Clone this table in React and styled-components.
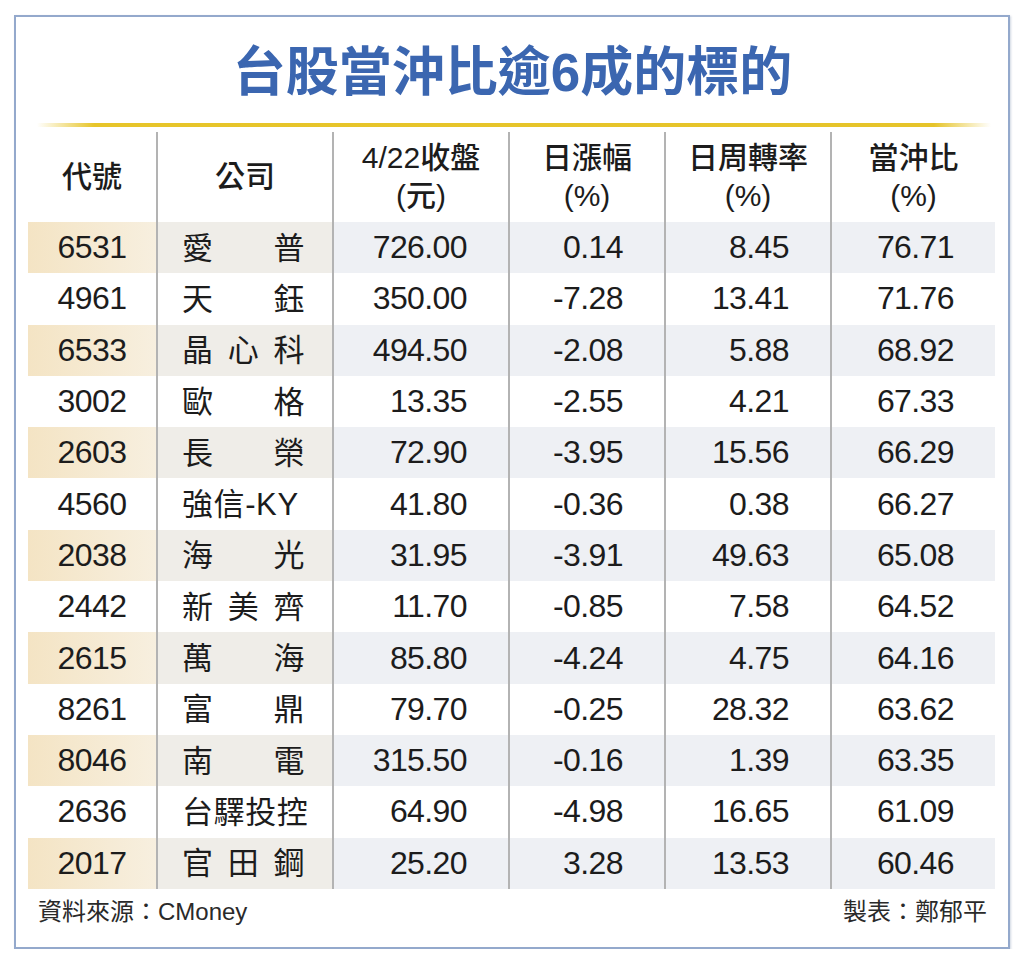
import React from "react";
import styled, { createGlobalStyle } from "styled-components";

const GlobalStyle = createGlobalStyle`
  html, body { margin: 0; padding: 0; background: #ffffff; }
  body { font-family: "Liberation Sans", "Noto Sans CJK TC", sans-serif; color: #1c1c1c; }
`;

const CJK = `"Liberation Sans", "Noto Sans CJK TC", sans-serif`;

const Frame = styled.div`
  box-sizing: border-box;
  width: 996px;
  height: 934px;
  margin: 15px 0 0 14px;
  border: 2px solid #94a9cc;
  box-shadow: 1px 1px 2px rgba(120, 140, 170, 0.35);
  padding: 0 11px 0 12px;
  display: flex;
  flex-direction: column;
`;

const Title = styled.h1`
  margin: 0;
  padding-top: 26px;
  height: 60px;
  line-height: 60px;
  text-align: center;
  font-family: ${CJK};
  font-size: 53px;
  font-weight: 700;
  color: #3b66b0;
`;

const Rule = styled.div`
  margin: 20px 6px 0 9px;
  height: 4px;
  background: linear-gradient(
    to right,
    rgba(230, 196, 40, 0) 0%,
    #e7c52a 6%,
    #e6c42a 94%,
    rgba(230, 196, 40, 0) 100%
  );
`;

const Table = styled.div`
  margin-top: 5px;
  display: grid;
  grid-template-columns: 128px 176px 176px 156px 166px 165px;
`;

const HeadCell = styled.div`
  height: 90px;
  display: flex;
  flex-direction: column;
  align-items: center;
  justify-content: center;
  font-family: ${CJK};
  font-size: 30px;
  font-weight: 500;
  line-height: 38px;
  color: #1c1c1c;
  border-left: ${(p) => (p.$first ? "none" : "2px solid #b3b3b3")};
  box-sizing: border-box;
`;

const Cell = styled.div`
  height: 51.3px;
  box-sizing: border-box;
  display: flex;
  align-items: center;
  font-family: ${CJK};
  font-size: 32px;
  letter-spacing: -0.6px;
  color: #1c1c1c;
  border-left: ${(p) => (p.$first ? "none" : "2px solid #b3b3b3")};
  justify-content: ${(p) => (p.$center ? "center" : "flex-end")};
  padding-right: ${(p) => (p.$center ? "0" : "41px")};
  background: ${(p) =>
    !p.$shade
      ? "#ffffff"
      : p.$kind === "code"
      ? "linear-gradient(to right, #f4e4c4, #f7efdf)"
      : p.$kind === "name"
      ? "#efede8"
      : "#eef0f4"};
`;

const NameCell = styled(Cell)`
  justify-content: space-between;
  padding: 0 27px 5px 24px;
  font-size: 31px;
  letter-spacing: 0.6px;
`;

const Footer = styled.div`
  display: flex;
  justify-content: space-between;
  align-items: center;
  padding: 6px 10px 0 10px;
  height: 30px;
  font-family: ${CJK};
  font-size: 24px;
  color: #2a2a2a;
`;

const rows = [
  ["6531", ["愛", "普"], "726.00", "0.14", "8.45", "76.71"],
  ["4961", ["天", "鈺"], "350.00", "-7.28", "13.41", "71.76"],
  ["6533", ["晶", "心", "科"], "494.50", "-2.08", "5.88", "68.92"],
  ["3002", ["歐", "格"], "13.35", "-2.55", "4.21", "67.33"],
  ["2603", ["長", "榮"], "72.90", "-3.95", "15.56", "66.29"],
  ["4560", ["強信-KY"], "41.80", "-0.36", "0.38", "66.27"],
  ["2038", ["海", "光"], "31.95", "-3.91", "49.63", "65.08"],
  ["2442", ["新", "美", "齊"], "11.70", "-0.85", "7.58", "64.52"],
  ["2615", ["萬", "海"], "85.80", "-4.24", "4.75", "64.16"],
  ["8261", ["富", "鼎"], "79.70", "-0.25", "28.32", "63.62"],
  ["8046", ["南", "電"], "315.50", "-0.16", "1.39", "63.35"],
  ["2636", ["台", "驛", "投", "控"], "64.90", "-4.98", "16.65", "61.09"],
  ["2017", ["官", "田", "鋼"], "25.20", "3.28", "13.53", "60.46"],
];

const headers = [
  ["代號"],
  ["公司"],
  ["4/22收盤", "(元)"],
  ["日漲幅", "(%)"],
  ["日周轉率", "(%)"],
  ["當沖比", "(%)"],
];

export default function App() {
  return (
    <>
      <GlobalStyle />
      <Frame>
        <Title>台股當沖比逾6成的標的</Title>
        <Rule />
        <Table>
          {headers.map((h, i) => (
            <HeadCell key={i} $first={i === 0}>
              {h.map((line, j) => (
                <span key={j}>{line}</span>
              ))}
            </HeadCell>
          ))}
          {rows.map((r, ri) => {
            const shade = ri % 2 === 0;
            return (
              <React.Fragment key={r[0]}>
                <Cell $first $center $shade={shade} $kind="code">
                  {r[0]}
                </Cell>
                <NameCell $shade={shade} $kind="name">
                  {r[1].map((c, ci) => (
                    <span key={ci}>{c}</span>
                  ))}
                </NameCell>
                {r.slice(2).map((v, vi) => (
                  <Cell key={vi} $shade={shade}>
                    {v}
                  </Cell>
                ))}
              </React.Fragment>
            );
          })}
        </Table>
        <Footer>
          <span>資料來源：CMoney</span>
          <span>製表：鄭郁平</span>
        </Footer>
      </Frame>
    </>
  );
}
